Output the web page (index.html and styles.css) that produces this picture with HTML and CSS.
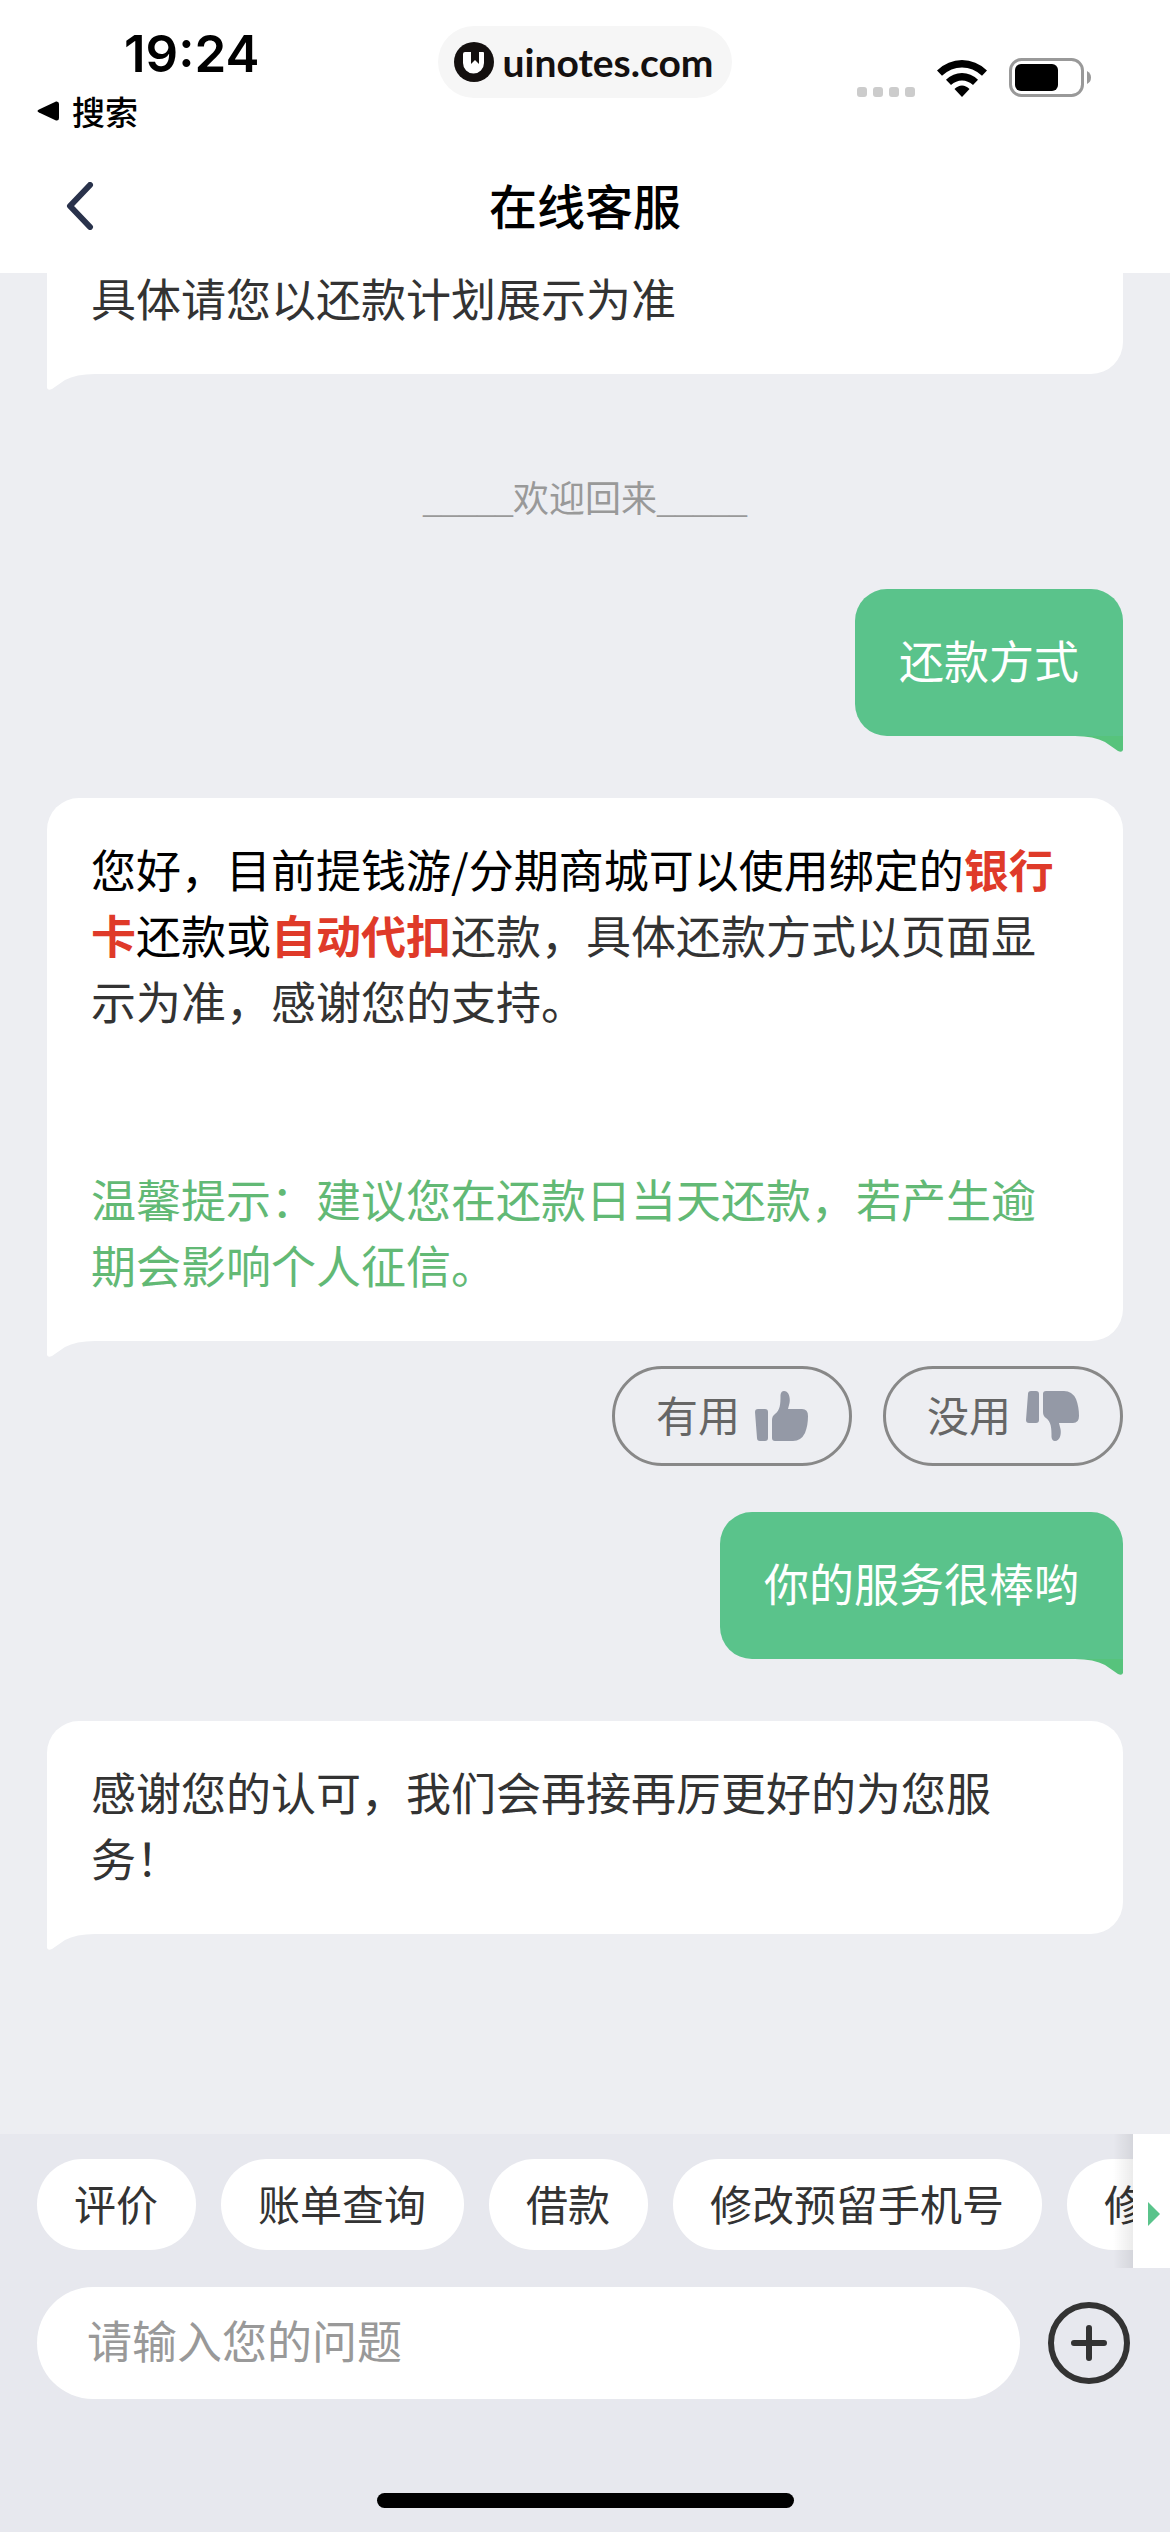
FILE: index.html
```html
<!DOCTYPE html>
<html lang="zh-CN">
<head>
<meta charset="utf-8">
<meta name="viewport" content="width=device-width, initial-scale=1">
<title>在线客服</title>
<link rel="stylesheet" href="styles.css">
</head>
<body>
<div class="app">
  <header class="header">
    <div class="status">
      <div class="status-left">
        <time class="clock">19:24</time>
        <a class="return-link" href="#">
          <svg width="22" height="20" viewBox="0 0 22 20" aria-hidden="true"><path d="M2 8.500 19 .5Q22 0 22 3V17Q22 20 19 19.500L2 11.500Q-1 10 2 8.500Z"/></svg>
          搜索
        </a>
      </div>
      <div class="site-pill">
        <svg width="40" height="40" viewBox="0 0 40 40" aria-hidden="true"><circle cx="20" cy="20" r="20" fill="#14100f"/><path d="M11 10h6v12l4-4 4 4V10h4q1 0 1 1v10a10.500 10.500 0 0 1-21 0v-9q0-2 2-2z" fill="#fff"/></svg>
        <span>uinotes.com</span>
      </div>
      <div class="status-right">
        <svg class="signal" width="58" height="10" viewBox="0 0 58 10" fill="#ccc" aria-hidden="true"><rect width="10" height="10" rx="3"/><rect x="16" width="10" height="10" rx="3"/><rect x="32" width="10" height="10" rx="3"/><rect x="48" width="10" height="10" rx="3"/></svg>
        <svg class="wifi" width="50" height="37" viewBox="0 0 50 37" aria-hidden="true"><path d="M0 10.500Q11 0 25 0T50 10.500L45 15.700Q36 7.500 25 7.500T5 15.700ZM9 19.800Q16 13 25 13T41 19.800L36 25Q31 20.500 25 20.500T14 25ZM17.500 29Q21 25.500 25 25.500T32.500 29L25 37Z"/></svg>
        <svg class="battery" width="83" height="39" viewBox="0 0 83 39" aria-hidden="true"><rect x="1.500" y="1.500" width="72" height="36" rx="11" fill="none" stroke="#999" stroke-width="3"/><rect x="6" y="6" width="43" height="27" rx="6"/><path d="M78 13q4 2 4 6.500T78 26Z" fill="#999"/></svg>
      </div>
    </div>
    <nav class="nav">
      <button class="back" type="button" aria-label="返回"><svg width="28" height="48" viewBox="0 0 28 48" aria-hidden="true"><path d="M24 3 4 24l20 21" fill="none" stroke="#29324b" stroke-width="6" stroke-linecap="round" stroke-linejoin="round"/></svg></button>
      <h1 class="title">在线客服</h1>
    </nav>
  </header>

  <main class="thread">
    <p class="bubble agent">具体请您以还款计划展示为准</p>
    <p class="welcome"><span class="rule">_____</span>欢迎回来<span class="rule">_____</span></p>
    <p class="bubble user">还款方式</p>
    <div class="bubble agent answer">
      <p><span class="ink">您好，目前提钱游/分期商城可以使用绑定的</span><strong>银行卡</strong><span class="ink">还款或</span><strong>自动代扣</strong>还款，具体还款方式以页面显示为准，感谢您的支持。</p>
      <p class="tip">温馨提示：建议您在还款日当天还款，若产生逾期会影响个人征信。</p>
    </div>
    <div class="feedback">
      <button class="vote" type="button"><span class="label">有用</span>
        <svg width="53" height="50" viewBox="0 0 53 50" fill="#9499a6" aria-hidden="true"><path d="M3 18H10Q13 18 13 21V47Q13 50 10 50H5Q2 50 2 47L0 21Q0 18 3 18ZM17 47V29Q17 25 20 23C25 19 25.500 14 25.500 4Q26 0 29 0C34 0 35.500 7 34.500 12L33 18H47Q53 18 53 25C53 31 52 37 50 42Q46 50 38 50H20Q17 50 17 47Z"/></svg>
      </button>
      <button class="vote" type="button"><span class="label">没用</span>
        <svg width="53" height="50" viewBox="0 0 53 50" fill="#9499a6" aria-hidden="true"><path transform="matrix(1 0 0 -1 0 50)" d="M3 18H10Q13 18 13 21V47Q13 50 10 50H5Q2 50 2 47L0 21Q0 18 3 18ZM17 47V29Q17 25 20 23C25 19 25.500 14 25.500 4Q26 0 29 0C34 0 35.500 7 34.500 12L33 18H47Q53 18 53 25C53 31 52 37 50 42Q46 50 38 50H20Q17 50 17 47Z"/></svg>
      </button>
    </div>
    <p class="bubble user">你的服务很棒哟</p>
    <p class="bubble agent">感谢您的认可，我们会再接再厉更好的为您服务！</p>
  </main>

  <footer class="footer">
    <div class="shortcuts">
      <div class="chips">
        <button class="chip" type="button">评价</button>
        <button class="chip" type="button">账单查询</button>
        <button class="chip" type="button">借款</button>
        <button class="chip" type="button">修改预留手机号</button>
        <button class="chip" type="button">修改</button>
      </div>
      <button class="more" type="button" aria-label="更多"><svg width="12" height="24" viewBox="0 0 12 24" aria-hidden="true"><path d="M0 0 12 12 0 24Z" fill="#5ac38b"/></svg></button>
    </div>
    <form class="composer">
      <input class="field" type="text" placeholder="请输入您的问题" aria-label="请输入您的问题">
      <button class="add" type="button" aria-label="添加"><svg width="82" height="82" viewBox="0 0 82 82" fill="none" stroke="#333" stroke-width="6" stroke-linecap="round" aria-hidden="true"><circle cx="41" cy="41" r="38"/><path d="M41 26v30M26 41h30"/></svg></button>
    </form>
    <div class="home-bar"></div>
  </footer>
</div>
</body>
</html>
```

FILE: styles.css
```css
* {
  box-sizing: border-box;
}

body {
  margin: 0;
  background: #edeef2;
  color: #333;
  font-family: "Noto Sans CJK SC", sans-serif;
  font-size: 45px;
  line-height: 66px;
}

p,
h1 {
  margin: 0;
}

button,
input {
  margin: 0;
  padding: 0;
  border: 0;
  background: none;
  color: inherit;
  font: inherit;
}

svg {
  display: block;
  flex: none;
}

.app {
  display: flex;
  flex-direction: column;
  height: 100vh;
}

/* Header */
.header {
  flex: none;
  position: relative;
  background: #fff;
  color: #000;
}

.status {
  display: grid;
  grid-template-columns: 1fr auto 1fr;
  align-items: start;
  padding: 24px 78px 0 37px;
}

.status-left {
  display: flex;
  flex-direction: column;
  margin-right: -41px;
}

.clock {
  padding-left: 87px;
  font: 600 51px/60px Inter, sans-serif;
}

.return-link {
  display: flex;
  align-items: center;
  gap: 13px;
  color: #000;
  font-size: 33px;
  font-weight: 500;
  line-height: 54px;
  text-decoration: none;
}

.site-pill {
  display: flex;
  align-items: center;
  gap: 8px;
  height: 72px;
  margin-top: 2px;
  margin-left: 41px;
  padding: 0 18px 0 16px;
  border-radius: 36px;
  background: #f6f6f6;
  color: #14100f;
  font: 700 39px/72px Lato, sans-serif;
}

.status-right {
  display: flex;
  justify-content: flex-end;
  align-items: flex-end;
  gap: 22px;
  padding-top: 34px;
}

.nav {
  display: grid;
  grid-template-columns: 1fr auto 1fr;
  align-items: center;
  height: 135px;
  padding: 0 66px;
}

.title {
  padding-bottom: 4px;
  font-size: 48px;
  font-weight: 500;
}

/* Conversation */
.thread {
  flex: 1;
  min-height: 0;
  display: flex;
  flex-direction: column;
  justify-content: flex-end;
  padding: 0 47px 200px;
  overflow: hidden;
}

.bubble {
  position: relative;
  flex: none;
  padding: 38px 44px 43px;
  border-radius: 32px;
}

.bubble::after {
  content: "";
  position: absolute;
  top: 100%;
  width: 48px;
  height: 16px;
}

.agent {
  background: #fff;
  border-bottom-left-radius: 0;
}

.agent::after {
  left: 0;
  background: #fff;
  clip-path: path("M0 0V14Q1 17 5 15L18 6Q29 0 48 0Z");
}

.user {
  align-self: flex-end;
  background: #5ac38b;
  border-bottom-right-radius: 0;
  color: #fff;
}

.user::after {
  right: 0;
  background: #57c37c;
  clip-path: path("M48 0V14Q47 17 43 15L30 6Q19 0 0 0Z");
}

.user + .agent {
  margin-top: 62px;
}

.welcome {
  flex: none;
  margin: 89px 0 60px;
  color: #999;
  font-size: 36px;
  text-align: center;
}

.rule {
  font-family: "Liberation Serif", serif;
  line-height: 1;
}

.ink {
  color: #000;
}

.answer strong {
  color: #df3a29;
  font-weight: 700;
}

.tip {
  margin-top: 132px;
  color: #62b975;
}

.feedback {
  flex: none;
  display: flex;
  justify-content: flex-end;
  gap: 31px;
  margin: 25px 0 46px;
}

.vote {
  display: flex;
  align-items: center;
  gap: 15px;
  height: 100px;
  padding: 0 41px;
  border: 3px solid #888;
  border-radius: 50px;
  color: #666;
  font-size: 42px;
}

.label {
  padding-bottom: 4px;
}

/* Footer */
.footer {
  flex: none;
  background: #e7e8ee;
}

.shortcuts {
  display: flex;
  height: 134px;
}

.chips {
  flex: 1;
  min-width: 0;
  display: flex;
  align-items: flex-start;
  gap: 25px;
  padding: 25px 0 0 37px;
  overflow: hidden;
}

.chip {
  flex: none;
  height: 91px;
  padding: 0 38px 4px 37px;
  border-radius: 46px;
  background: #fff;
  font-size: 42px;
}

.more {
  position: relative;
  flex: none;
  width: 37px;
  padding: 26px 0 0 15px;
  background: #fff;
}

.more::before {
  content: "";
  position: absolute;
  top: 0;
  right: 100%;
  width: 20px;
  height: 100%;
  background: linear-gradient(to left, rgba(0, 0, 0, 0.08), transparent);
}

.composer {
  display: flex;
  align-items: center;
  gap: 28px;
  padding: 19px 40px 0 37px;
}

.field {
  flex: 1;
  min-width: 0;
  height: 112px;
  padding: 0 50px 8px;
  border-radius: 56px;
  background: #fff;
}

.field::placeholder {
  color: #999;
  opacity: 1;
}

.home-bar {
  width: 417px;
  height: 15px;
  margin: 94px auto 24px;
  border-radius: 8px;
  background: #000;
}
```
